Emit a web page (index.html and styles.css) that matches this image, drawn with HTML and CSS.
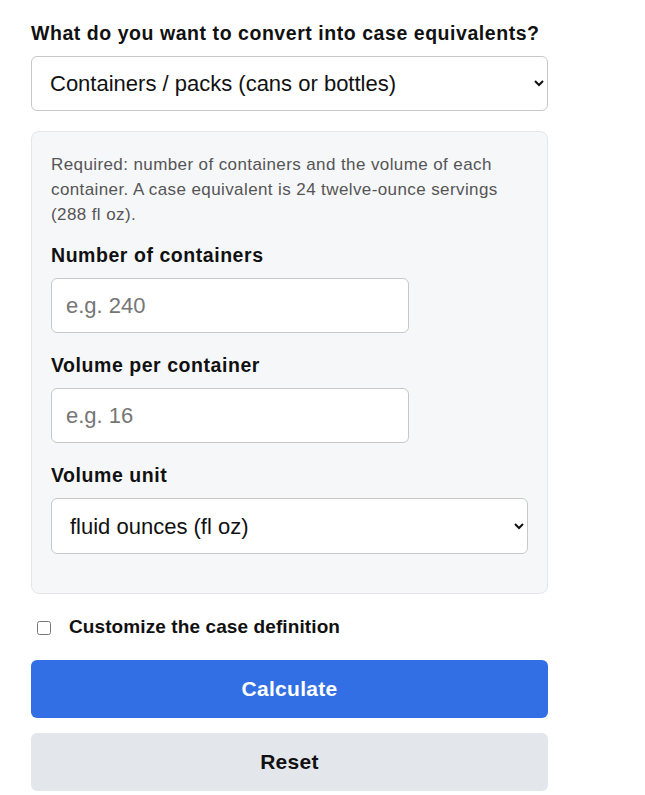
FILE: index.html
```html
<!DOCTYPE html>
<html lang="en">
<head>
  <meta charset="UTF-8" />
  <meta name="viewport" content="width=device-width, initial-scale=1.0" />
  <title>Case Equivalent Converter</title>
  <link rel="stylesheet" href="styles.css">
</head>
<body>
  <div class="container">
    <form id="caseForm">
      <label class="top-label" for="mode">What do you want to convert into case equivalents?</label>
      <select id="mode" class="wide">
        <option value="containers">Containers / packs (cans or bottles)</option>
        <option value="volume">Total volume</option>
      </select>

      <div class="panel">
        <p class="hint">Required: number of containers and the volume of each container. A case equivalent is 24 twelve-ounce servings (288 fl oz).</p>

        <label for="count">Number of containers</label>
        <input type="text" id="count" class="short" placeholder="e.g. 240" />

        <label for="volume">Volume per container</label>
        <input type="text" id="volume" class="short" placeholder="e.g. 16" />

        <label for="unit">Volume unit</label>
        <select id="unit" class="wide">
          <option value="floz">fluid ounces (fl oz)</option>
          <option value="ml">milliliters (mL)</option>
          <option value="l">liters (L)</option>
        </select>
      </div>

      <div class="check-row">
        <input type="checkbox" id="custom" />
        <label for="custom">Customize the case definition</label>
      </div>

      <button type="button" class="btn primary">Calculate</button>
      <button type="reset" class="btn secondary">Reset</button>
    </form>
  </div>
</body>
</html>
```

FILE: styles.css
```css
body {
  font-family: "Liberation Sans", Arial, sans-serif;
  color: #111;
  background: #fff;
  margin: 0;
  padding: 0;
}
.container {
  width: 517px;
  padding: 23px 31px 0;
}
label {
  display: block;
  font-weight: bold;
  font-size: 19.5px;
  letter-spacing: 0.55px;
  line-height: 21px;
  margin-bottom: 12px;
}
.top-label {
  margin-bottom: 12px;
}
select, input[type="text"] {
  box-sizing: border-box;
  display: block;
  font-family: inherit;
  font-size: 22px;
  color: #111;
  background: #fff;
  border: 1px solid #c8c8c8;
  border-radius: 6px;
}
select.wide {
  width: 100%;
  height: 55px;
  padding: 0 14px;
}
.panel select.wide {
  height: 56px;
}
input.short {
  width: 358px;
  height: 55px;
  padding: 0 14px;
  margin-bottom: 22px;
}
input::placeholder {
  color: #767676;
}
.panel {
  margin-top: 20px;
  background: #f6f7f9;
  border: 1px solid #e4e6ea;
  border-radius: 8px;
  padding: 20px 19px 39px;
}
.hint {
  margin: 0 0 18px;
  font-size: 17px;
  letter-spacing: 0.4px;
  line-height: 25px;
  color: #555;
}
.check-row {
  display: flex;
  align-items: center;
  margin: 22px 0 23px 6px;
}
.check-row input {
  margin: 2px 18px 0 0;
  width: 14px;
  height: 14px;
}
.check-row label {
  margin: 0;
  font-size: 19px;
  letter-spacing: 0.1px;
}
.btn {
  display: block;
  width: 100%;
  height: 58px;
  border: none;
  border-radius: 6px;
  font-family: inherit;
  font-size: 21px;
  letter-spacing: 0.3px;
  font-weight: bold;
  cursor: pointer;
  margin-bottom: 15px;
}
.primary {
  background: #326fe5;
  color: #fff;
}
.secondary {
  background: #e3e6eb;
  color: #111;
}
```
